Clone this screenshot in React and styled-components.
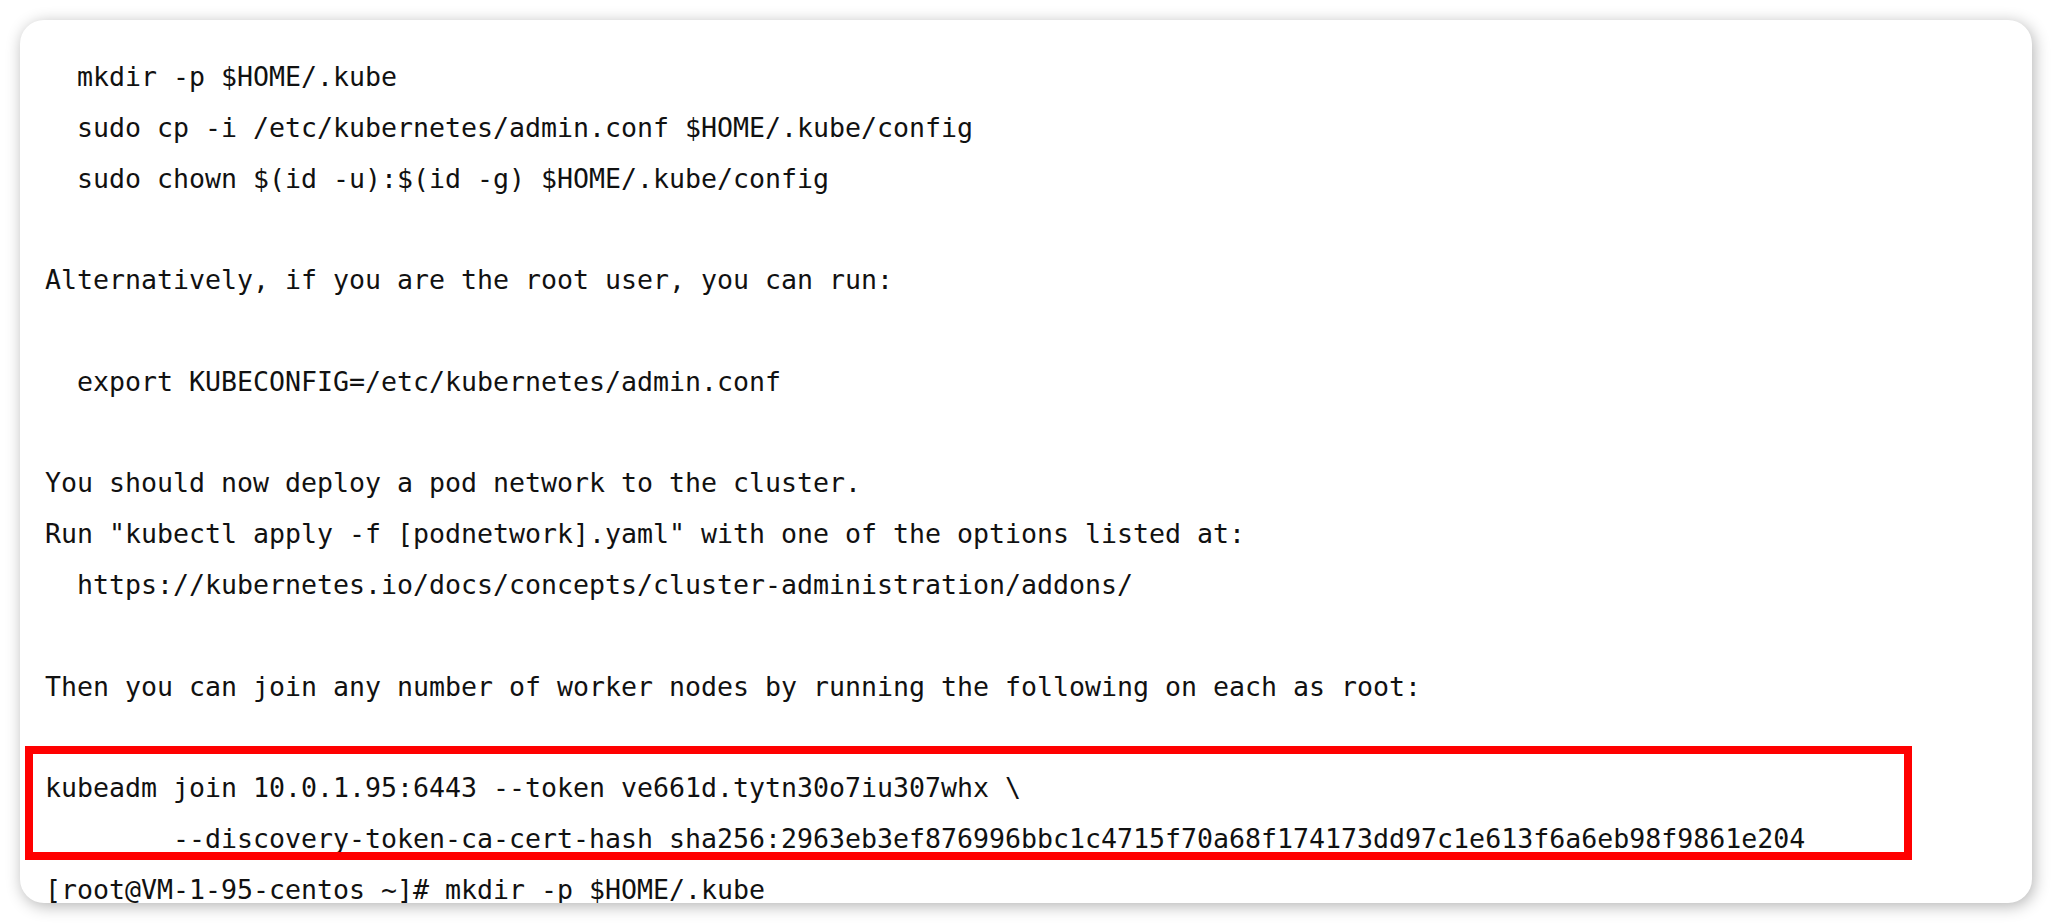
import React from "react";
import styled, { createGlobalStyle } from "styled-components";

const GlobalStyle = createGlobalStyle`
  html, body {
    margin: 0;
    padding: 0;
    background: #ffffff;
  }
  #root {
    width: 100%;
  }
`;

const Page = styled.div`
  box-sizing: border-box;
  width: 100%;
  height: 924px;
  padding: 20px;
  background: #ffffff;
`;

const Card = styled.div`
  box-sizing: border-box;
  height: 883px;
  background: #ffffff;
  border-radius: 24px;
  box-shadow: 2px 3px 16px rgba(0, 0, 0, 0.3);
  overflow: hidden;
  padding: 32px 25px 0 25px;
`;

const Terminal = styled.div`
  font-family: "DejaVu Sans Mono", "Liberation Mono", monospace;
  font-size: 26.58px;
  line-height: 50.8px;
  color: #111111;
  white-space: pre;
`;

const Line = styled.div`
  height: 50.8px;
`;

const Highlight = styled.div`
  position: relative;

  &::before {
    content: "";
    position: absolute;
    left: -20px;
    top: -17px;
    width: 1887px;
    height: 114px;
    box-sizing: border-box;
    border: 8px solid #ff0000;
    pointer-events: none;
  }
`;

const linesBefore = [
  "  mkdir -p $HOME/.kube",
  "  sudo cp -i /etc/kubernetes/admin.conf $HOME/.kube/config",
  "  sudo chown $(id -u):$(id -g) $HOME/.kube/config",
  "",
  "Alternatively, if you are the root user, you can run:",
  "",
  "  export KUBECONFIG=/etc/kubernetes/admin.conf",
  "",
  "You should now deploy a pod network to the cluster.",
  'Run "kubectl apply -f [podnetwork].yaml" with one of the options listed at:',
  "  https://kubernetes.io/docs/concepts/cluster-administration/addons/",
  "",
  "Then you can join any number of worker nodes by running the following on each as root:",
  "",
];

const joinLines = [
  "kubeadm join 10.0.1.95:6443 --token ve661d.tytn30o7iu307whx \\",
  "        --discovery-token-ca-cert-hash sha256:2963eb3ef876996bbc1c4715f70a68f174173dd97c1e613f6a6eb98f9861e204",
];

const linesAfter = ["[root@VM-1-95-centos ~]# mkdir -p $HOME/.kube"];

export default function App() {
  return (
    <>
      <GlobalStyle />
      <Page>
        <Card>
          <Terminal>
            {linesBefore.map((t, i) => (
              <Line key={"b" + i}>{t}</Line>
            ))}
            <Highlight>
              {joinLines.map((t, i) => (
                <Line key={"j" + i}>{t}</Line>
              ))}
            </Highlight>
            {linesAfter.map((t, i) => (
              <Line key={"a" + i}>{t}</Line>
            ))}
          </Terminal>
        </Card>
      </Page>
    </>
  );
}
